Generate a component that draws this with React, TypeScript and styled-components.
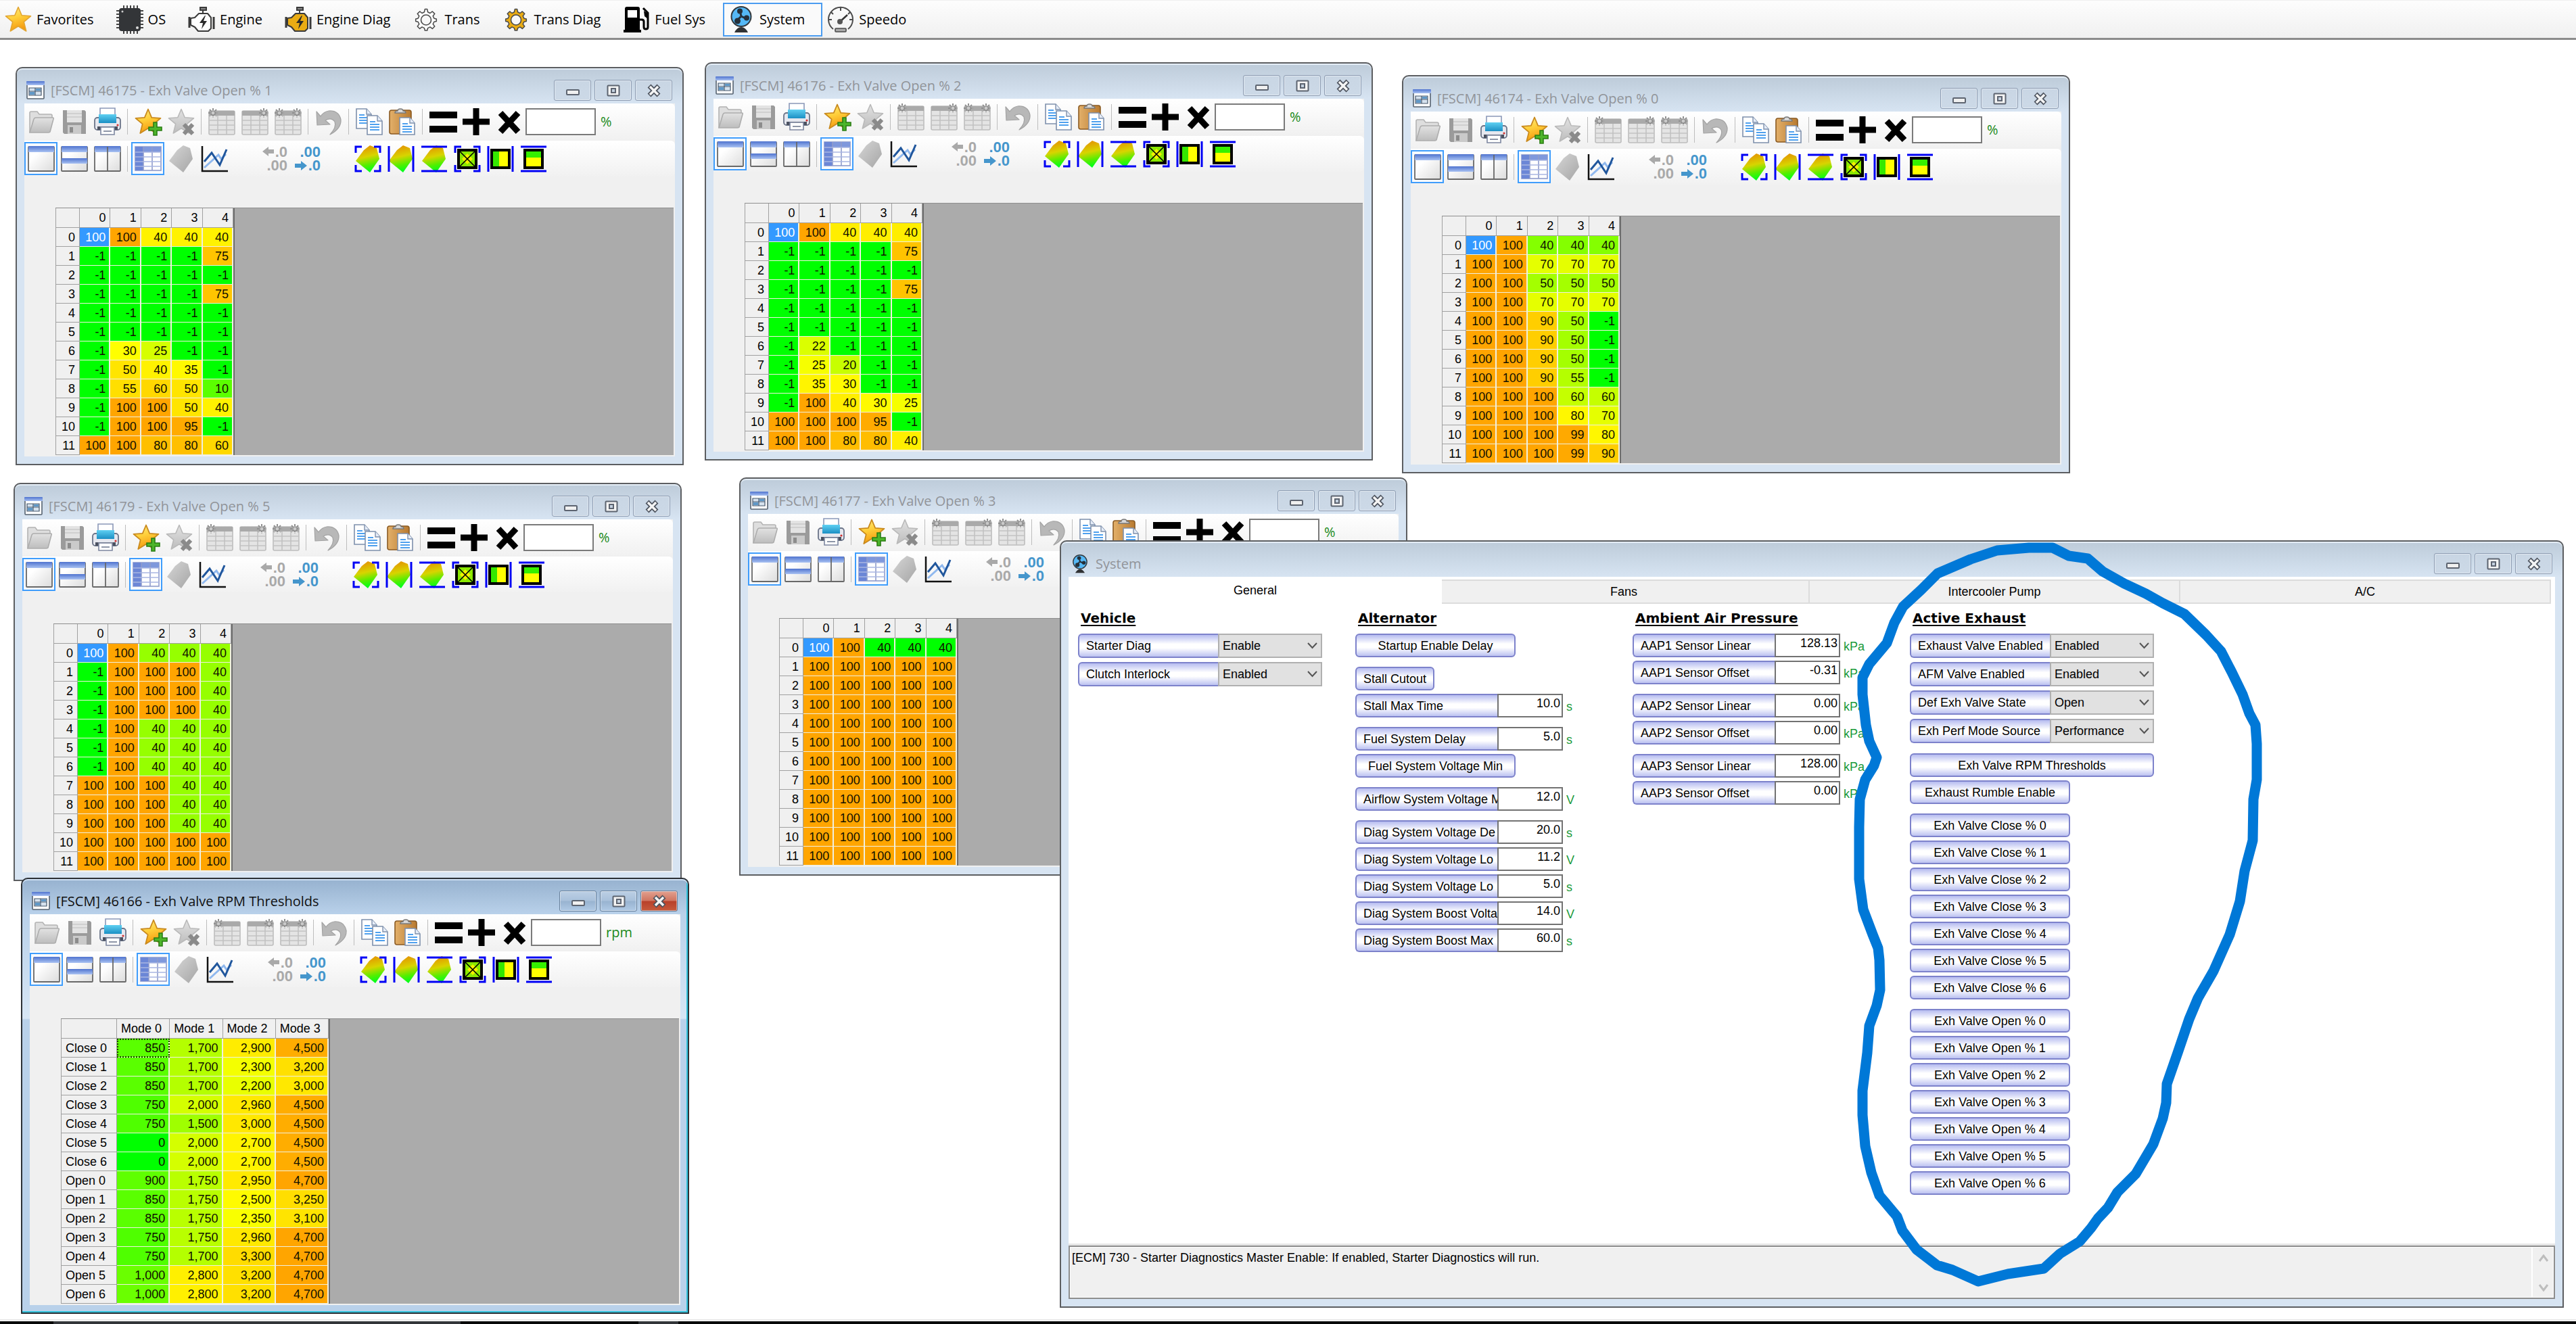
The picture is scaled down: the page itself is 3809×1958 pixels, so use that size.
import React from "react";
import styled, { createGlobalStyle, css } from "styled-components";

const uiFont = `"Liberation Sans", Arial, sans-serif`;
const titleFont = `"Open Sans", "Noto Sans", sans-serif`;

const GlobalStyle = createGlobalStyle`
  *, *::before, *::after { box-sizing: border-box; }
  body { margin: 0; background: #ffffff; color: #000000; font-family: ${uiFont}; font-size: 18px; line-height: 20px; }
  button, input, select, textarea { font: inherit; color: inherit; margin: 0; }
`;

/* ---------- page shell ---------- */

const Page = styled.div`
  display: flex;
  flex-direction: column;
  min-height: 100vh;
  overflow: hidden;
`;

const MainBar = styled.nav`
  display: flex;
  align-items: center;
  height: 59px;
  background: linear-gradient(#fdfdfd, #f0f0f0);
  border-top: 1px solid #f0f0f0;
  border-bottom: 3px solid #8c8c8c;
`;

const MainItem = styled.button<{ $active?: boolean }>`
  display: flex;
  align-items: center;
  gap: 7px;
  height: 50px;
  padding: 0 24px 0 5px;
  border: 2px solid ${(p) => (p.$active ? "#4a9cf0" : "transparent")};
  background: ${(p) => (p.$active ? "#fafafa" : "none")};
  font-family: ${titleFont};
  font-size: 20px;
  white-space: nowrap;
`;

const Workspace = styled.main`
  position: relative;
  flex: 1;
`;

const StatusEdge = styled.div`
  height: 7px;
  border-top: 2px solid #e8e8e8;
  background: #ffffff;
  display: flex;
  align-items: flex-end;
`;

const Taskbar = styled.div`
  display: flex;
  width: 100%;
  height: 4px;
  background: #060808;
`;

const TaskSlot = styled.span<{ $width: number; $offset: number }>`
  width: ${(p) => p.$width}px;
  margin-left: ${(p) => p.$offset}px;
  background: #33363a;
`;

/* ---------- child windows ---------- */

const Frame = styled.section<{ $x: number; $y: number; $active?: boolean }>`
  position: absolute;
  left: ${(p) => p.$x}px;
  top: ${(p) => p.$y}px;
  width: 988px;
  padding: 0 11px 11px;
  border: 2px solid #5c5e61;
  border-radius: 10px 10px 0 0;
  background: ${(p) =>
    p.$active
      ? "linear-gradient(#99b4d1 4px, #b9d1ea 52px, #d7e6f5 206px, #b9d1ea 208px)"
      : "linear-gradient(#bfcddb 4px, #d7e4f2 52px)"};
  box-shadow: inset 0 2px 0 #e4edf6;
  ${(p) =>
    p.$active &&
    css`
      border-color: #2c3136;
      box-shadow: inset 0 2px 0 #cfe0f2, inset -2px -2px 0 #2fc3dc;
    `}
`;

const SystemFrame = styled(Frame)`
  width: auto;
  right: 18px;
  bottom: 17px;
  display: flex;
  flex-direction: column;
`;

const TitleBar = styled.header<{ $active?: boolean }>`
  display: flex;
  align-items: center;
  gap: 5px;
  height: 52px;
  padding: 13px 4px 0 3px;
  color: ${(p) => (p.$active ? "#101010" : "#919499")};
`;

const Title = styled.h2`
  flex: 1;
  margin: 0 0 0 4px;
  font-family: ${titleFont};
  font-size: 20px;
  font-weight: 400;
  line-height: 28px;
  white-space: nowrap;
`;

const CaptionButton = styled.button<{ $danger?: boolean; $active?: boolean }>`
  display: flex;
  align-items: center;
  justify-content: center;
  width: 55px;
  height: 31px;
  padding: 0;
  border: 1px solid ${(p) => (p.$active ? "#66809c" : "#8d9cb2")};
  border-radius: 3px;
  box-shadow: inset 0 0 0 1px rgba(255, 255, 255, 0.45);
  background: ${(p) =>
    p.$danger
      ? "linear-gradient(#e2a08f, #d07560 48%, #b8402a 52%, #c65a3c)"
      : p.$active
        ? "linear-gradient(#bccfe4, #a9c1db 48%, #98b3d0 52%, #b0cae5)"
        : "linear-gradient(#c9d6e4, #ccd9e7)"};
`;

const Client = styled.div`
  background: #f0f0f0;
  padding-bottom: 2px;
`;

const ToolRow = styled.div`
  display: flex;
  align-items: center;
  height: 53px;
  margin-bottom: 2px;
  background: linear-gradient(#ffffff, #f1f1f1);
  border-radius: 0 6px 6px 0;
`;

const Tool = styled.button<{ $on?: boolean }>`
  display: flex;
  align-items: center;
  justify-content: center;
  width: 49px;
  height: 49px;
  padding: 0;
  border: 2px solid ${(p) => (p.$on ? "#3f9dfc" : "transparent")};
  background: ${(p) => (p.$on ? "#f7fafe" : "none")};
`;

const ToolSeparator = styled.span`
  width: 1px;
  height: 38px;
  margin: 0 5px;
  background: #bdbdbd;
`;

const ToolGap = styled.span`
  width: 40px;
`;

const ValueBox = styled.input`
  width: 104px;
  height: 40px;
  padding: 0 6px;
  border: 2px solid #7a7a7a;
  background: #ffffff;
`;

const UnitText = styled.label`
  margin-left: 7px;
  color: #1a8a1a;
  font-family: ${titleFont};
  font-size: 20px;
`;

const GridArea = styled.div`
  margin: 46px 2px 0 46px;
  background: #ababab;
  border-top: 1px solid #8e8e8e;
`;

const DataTable = styled.table<{ $width: number }>`
  width: ${(p) => p.$width}px;
  table-layout: fixed;
  border-collapse: separate;
  border-spacing: 0;
  border-left: 1px solid #a0a0a0;
  border-right: 2px solid #6d6d6d;
`;

const HeadCol = styled.col<{ $width: number }>`
  width: ${(p) => p.$width}px;
`;

const HeadRow = styled.tr`
  height: 29px;
`;

const HeadCell = styled.th<{ $left?: boolean }>`
  height: 28px;
  padding: ${(p) => (p.$left ? "0 0 0 6px" : "0 6px 0 0")};
  border-right: 1px solid #a0a0a0;
  border-bottom: 1px solid #a0a0a0;
  background: #f0f0f0;
  font-weight: 400;
  text-align: ${(p) => (p.$left ? "left" : "right")};
  white-space: nowrap;
`;

const DataCell = styled.td<{ $selected?: boolean; $focus?: boolean }>`
  height: 28px;
  padding: 0 5px 0 0;
  border-right: 2px solid #f0f0e0;
  border-bottom: 1px solid #f0f0e0;
  text-align: right;
  outline: ${(p) => (p.$focus ? "2px dotted #1c3a00" : "none")};
  outline-offset: -2px;
  color: ${(p) => (p.$selected ? "#ffffff" : "#101000")};
`;

/* ---------- system window ---------- */

const SystemClient = styled.div`
  display: flex;
  flex-direction: column;
  flex: 1;
  background: #ffffff;
`;

const TabStrip = styled.div`
  display: grid;
  grid-template-columns: repeat(4, 1fr);
  align-items: end;
  height: 40px;
  padding-right: 6px;
`;

const Tab = styled.button<{ $active?: boolean }>`
  position: relative;
  z-index: ${(p) => (p.$active ? 1 : 0)};
  height: ${(p) => (p.$active ? 40 : 36)}px;
  margin-right: ${(p) => (p.$active ? -4 : 0)}px;
  padding: 0;
  border: ${(p) => (p.$active ? "0" : "2px solid #dcdcdc")};
  border-left-width: 0;
  background: ${(p) => (p.$active ? "#ffffff" : "#f0f0f0")};
`;

const Columns = styled.div`
  display: flex;
  flex: 1;
  padding: 9px 0 0 14px;
`;

const Column = styled.div`
  width: 410px;
  display: flex;
  flex-direction: column;
  align-items: flex-start;
`;

const Heading = styled.h3`
  margin: 0 0 11px 4px;
  font-family: "DejaVu Sans", Verdana, sans-serif;
  font-size: 20px;
  line-height: 24px;
  font-weight: 700;
  text-decoration: underline;
  text-decoration-thickness: 2px;
  text-underline-offset: 3px;
`;

const Group = styled.div`
  display: flex;
  flex-direction: column;
  align-items: flex-start;
  gap: 5px;
  margin-bottom: 14px;
`;

const ChoiceGroup = styled(Group)`
  gap: 6px;
  margin-bottom: 15px;
`;

const glossy = css`
  border: 2px solid #7d82cb;
  background: linear-gradient(#b6bcf0, #ffffff 42%, #ffffff 60%, #bcc2f1);
`;

const LinkButton = styled.button<{ $width: number }>`
  ${glossy}
  width: ${(p) => p.$width}px;
  height: 35px;
  padding: 0;
  border-radius: 6px;
  white-space: nowrap;
`;

const FieldRow = styled.div`
  display: flex;
  align-items: center;
`;

const FieldLabel = styled.label<{ $tall?: boolean }>`
  ${glossy}
  width: ${(p) => (p.$tall ? 207 : 210)}px;
  height: ${(p) => (p.$tall ? 36 : 35)}px;
  padding: 6px 0 0 10px;
  border-right-width: 0;
  border-radius: 6px 0 0 6px;
  overflow: hidden;
  white-space: nowrap;
`;

const NumberBox = styled.input`
  width: 97px;
  height: 35px;
  padding: 0 2px 6px 2px;
  border: 2px solid #727272;
  background: #ffffff;
  text-align: right;
`;

const FieldUnit = styled.span`
  margin-left: 5px;
  padding-top: 2px;
  color: #1a9a3a;
`;

const SelectWrap = styled.span`
  position: relative;
  display: flex;
`;

const Select = styled.select`
  appearance: none;
  width: 154px;
  height: 36px;
  padding: 0 36px 0 5px;
  border: 2px solid #b0b0b0;
  border-radius: 0;
  background: #e1e1e1;
`;

const SelectArrow = styled.svg`
  position: absolute;
  right: 7px;
  top: 13px;
  pointer-events: none;
`;

const Info = styled.div`
  display: flex;
  height: 79px;
  border: 2px solid #8d8d8d;
  background: #f0f0f0;
  box-shadow: inset 0 0 0 1px #ffffff, 0 -3px 0 #e6e6e6;
`;

const InfoText = styled.textarea`
  flex: 1;
  padding: 6px 3px;
  border: 0;
  background: none;
  resize: none;
  overflow: hidden;
`;

const InfoScroll = styled.div`
  display: flex;
  flex-direction: column;
  justify-content: space-between;
  align-items: center;
  width: 33px;
  padding: 11px 0 9px;
  border-left: 2px solid #ffffff;
`;

const Annotation = styled.svg`
  position: absolute;
  left: 2700px;
  top: 731px;
  pointer-events: none;
`;

/* ---------- icons ---------- */

const IconSvg = styled.svg`
  overflow: visible;
`;

const HiddenDefs = styled.svg`
  position: absolute;
`;

const Defs = () => (
  <HiddenDefs width="0" height="0" aria-hidden="true">
    <defs>
      <linearGradient id="gold" x1="0" y1="0" x2="0.3" y2="1">
        <stop offset="0" stopColor="#ffee8a" />
        <stop offset="0.5" stopColor="#ffcf3a" />
        <stop offset="1" stopColor="#f59b10" />
      </linearGradient>
      <linearGradient id="silver" x1="0" y1="0" x2="0" y2="1">
        <stop offset="0" stopColor="#e2e2e2" />
        <stop offset="1" stopColor="#bdbdbd" />
      </linearGradient>
      <linearGradient id="band" x1="0" y1="0" x2="0" y2="1">
        <stop offset="0" stopColor="#4f73cf" />
        <stop offset="1" stopColor="#a9c2f2" />
      </linearGradient>
      <linearGradient id="pane" x1="0" y1="0" x2="1" y2="1">
        <stop offset="0.3" stopColor="#ffffff" />
        <stop offset="1" stopColor="#dcdcdc" />
      </linearGradient>
      <linearGradient id="heat" x1="0.2" y1="0" x2="0.4" y2="1">
        <stop offset="0.1" stopColor="#e39a00" />
        <stop offset="0.45" stopColor="#d8d400" />
        <stop offset="0.75" stopColor="#55ee00" />
        <stop offset="1" stopColor="#00ff1a" />
      </linearGradient>
      <linearGradient id="shade" x1="0" y1="0" x2="1" y2="1">
        <stop offset="0" stopColor="#d6d6d6" />
        <stop offset="1" stopColor="#a6a6a6" />
      </linearGradient>
      <linearGradient id="ink" x1="0" y1="0" x2="0" y2="1">
        <stop offset="0" stopColor="#5fd0f2" />
        <stop offset="1" stopColor="#1b8fc4" />
      </linearGradient>
      <linearGradient id="wood" x1="0" y1="0" x2="1" y2="0">
        <stop offset="0" stopColor="#e3b06a" />
        <stop offset="1" stopColor="#b87a30" />
      </linearGradient>
    </defs>
  </HiddenDefs>
);

const Icon = ({ children, size = 40 }: { children: React.ReactNode; size?: number }) => (
  <IconSvg width={size} height={size} viewBox="0 0 40 40" fill="none" aria-hidden="true">
    {children}
  </IconSvg>
);

const starPath = "M20 1.5l5.2 12.3 13.3 1-10.2 8.6 3.4 13.6L20 29.8 8.3 37l3.4-13.6L1.5 14.8l13.3-1z";

const StarIcon = () => (
  <Icon>
    <path d={starPath} fill="url(#gold)" stroke="#e2a531" strokeWidth="1.6" strokeLinejoin="round" />
  </Icon>
);

const ChipIcon = () => (
  <Icon>
    <path d="M11-1v42M16-1v42M21-1v42M26-1v42M31-1v42" stroke="#444" strokeWidth="2" />
    <path d="M0 7h40M0 12h40M0 17h40M0 22h40M0 27h40M0 32h40" stroke="#444" strokeWidth="2" />
    <rect x="4" y="3" width="32" height="34" rx="4" fill="#333538" />
    <circle cx="9" cy="8" r="1.5" fill="#ccc" />
    <circle cx="31" cy="32" r="2" fill="#ddd" />
  </Icon>
);

const EngineIcon = ({ gold }: { gold?: boolean }) => (
  <Icon>
    <path d="M18 2h9v4h-9zM22 5v7" stroke="#3a3a3a" strokeWidth="2" fill="#888" />
    <path d="M2 16v16M38 16v18" stroke="#3a3a3a" strokeWidth="3" />
    <path
      d="M16 11h13l5 6v16l-4 4H15l-5-6-6-3V18l6-1z"
      fill={gold ? "#eaac14" : "#ffffff"}
      stroke="#3a3a3a"
      strokeWidth="2"
      strokeLinejoin="round"
    />
    <path d="M25 14l-8 11h5l-2 9 8-12h-5l3-8z" fill="#2b2b2b" />
  </Icon>
);

const GearIcon = ({ gold }: { gold?: boolean }) => (
  <Icon>
    <path
      d="M18 3h4l1 5 4 2 4-3 4 4-3 4 2 4 4 1v4l-4 1-2 4 3 4-4 4-4-3-4 2-1 4h-4l-1-4-4-2-4 3-4-4 3-4-2-4-4-1v-4l4-1 2-4-3-4 4-4 4 3 4-2z"
      fill={gold ? "#eaac14" : "#fdfdfd"}
      stroke="#4a4a4a"
      strokeWidth="1.8"
      strokeLinejoin="round"
      transform="translate(3 2) scale(.85)"
    />
    <circle cx="20" cy="20.5" r="7.5" fill="#f8f8f8" stroke="#4a4a4a" strokeWidth="1.6" />
  </Icon>
);

const FuelIcon = () => (
  <Icon>
    <path d="M3 4q0-3 3-3h16q3 0 3 3v31h2v4H1v-4h2z" fill="#000" />
    <rect x="7" y="6" width="14" height="11" fill="#fff" />
    <path d="M25 20h3q3 0 3 3v8q0 3 3 3t3-3V10l-7-7" stroke="#000" strokeWidth="3" />
    <path d="M31 7l6 4v8l-5-4z" fill="#000" />
  </Icon>
);

const FanIcon = ({ size = 40 }: { size?: number }) => (
  <Icon size={size}>
    <circle cx="20" cy="15.5" r="14.5" fill="#55b8f5" stroke="#32383d" strokeWidth="2" />
    <path d="M20 15l-1-4M20 15l6 3M20 15l-5 5" stroke="#25303a" strokeWidth="3" />
    <circle cx="18" cy="7.5" r="4" fill="#25303a" />
    <circle cx="28" cy="17.5" r="4" fill="#25303a" />
    <circle cx="14.5" cy="22" r="4.5" fill="#25303a" />
    <path d="M20 31q6 0 10 8H10q4-8 10-8z" fill="#303234" />
  </Icon>
);

const SpeedoIcon = () => (
  <Icon>
    <path d="M9 34A18 18 0 1 1 31 34" stroke="#4a4a4a" strokeWidth="2" />
    <path d="M20 2v5M6 9l3 3M34 9l-3 3M2 20h5M38 20h-5" stroke="#4a4a4a" strokeWidth="2" />
    <path d="M30 13L18 24" stroke="#333" strokeWidth="2.5" />
    <circle cx="19" cy="23" r="4" fill="#555" />
    <rect x="12" y="33" width="16" height="5" rx="1" fill="#aaa" stroke="#4a4a4a" strokeWidth="1.6" />
  </Icon>
);

const FormIcon = () => (
  <svg width="27" height="27" viewBox="0 0 27 27" fill="none" aria-hidden="true">
    <rect x="1" y="1" width="25" height="25" rx="1" fill="#fff" stroke="#55616f" strokeWidth="1.6" />
    <rect x="0" y="0" width="27" height="6" rx="1" fill="url(#band)" />
    <path d="M4 10h9v5H4zM4 15h9v6H4zM13 10h9v5h-9zM13 15h9v6h-9z" fill="#d6e2ee" stroke="#44566b" strokeWidth="1.2" />
    <path d="M5 16h7v4H5zM14 11h7v3h-7z" fill="#5f98c8" />
  </svg>
);

const OpenIcon = () => (
  <Icon>
    <path d="M3 36V7q0-2 2-2h9l3 4h17q2 0 2 2v5" fill="#dedede" stroke="#b3b3b3" strokeWidth="1.6" />
    <path d="M3 36L9 16q1-2 3-2h25q2 0 1 2l-5 19q-1 1-3 1z" fill="url(#silver)" stroke="#adadad" strokeWidth="1.6" />
  </Icon>
);

const SaveIcon = () => (
  <Icon>
    <path d="M3 3h32l2 2v33H5l-2-2z" fill="#9b9b9b" />
    <rect x="9" y="3" width="22" height="18" fill="#e3e3e3" />
    <path d="M9 8h22M9 13h22" stroke="#d0d0d0" strokeWidth="2" />
    <rect x="10" y="25" width="20" height="13" fill="#cacaca" />
    <rect x="13" y="28" width="5" height="8" fill="#8c8c8c" />
  </Icon>
);

const PrintIcon = () => (
  <Icon>
    <path d="M9 0h22v13H9z" fill="#fff" stroke="#8b98b8" strokeWidth="1.6" />
    <rect x="1" y="14" width="38" height="18" rx="4" fill="#e6e8ef" stroke="#6b7488" strokeWidth="1.8" />
    <path d="M7 9h26v13H7z" fill="url(#ink)" />
    <path d="M5 27h30v5H5z" fill="#4b5160" />
    <path d="M10 28h20v11H10z" fill="#fff" stroke="#7d87a0" strokeWidth="1.6" />
    <path d="M14 34h12" stroke="#8e96a8" strokeWidth="2" />
    <circle cx="35" cy="25" r="1.6" fill="#d03030" />
  </Icon>
);

const FavAddIcon = () => (
  <Icon>
    <path d={starPath} fill="url(#gold)" stroke="#c98a1e" strokeWidth="1.8" strokeLinejoin="round" />
    <path d="M28 21h5v7h7v5h-7v7h-5v-7h-7v-5h7z" fill="#4db52a" stroke="#2b7d14" strokeWidth="1.6" />
  </Icon>
);

const FavRemoveIcon = () => (
  <Icon>
    <path d={starPath} fill="url(#silver)" stroke="#b9b9b9" strokeWidth="1.6" strokeLinejoin="round" />
    <path d="M24 24l13 14M37 24L24 38" stroke="#8a8a8a" strokeWidth="6" />
  </Icon>
);

const Spark = ({ x }: { x: number }) => (
  <g transform={`translate(${x} 0)`}>
    <path d="M6 0v14M-1 7h14M1 2l10 10M11 2L1 12" stroke="#8f8f8f" strokeWidth="2" strokeDasharray="3 1.5" />
    <circle cx="6" cy="7" r="3" fill="#c9c9c9" stroke="#8a8a8a" />
  </g>
);

const AxisIcon = ({ left, right }: { left?: boolean; right?: boolean }) => (
  <Icon>
    <rect x="1" y="4" width="38" height="35" rx="2" fill="#e4e4e4" stroke="#bdbdbd" strokeWidth="1.6" />
    <rect x="1" y="4" width="38" height="7" fill="#aaaaaa" />
    <path d="M14 11v28M27 11v28M1 18h38M1 25h38M1 32h38" stroke="#c2c2c2" strokeWidth="1.6" />
    {left && <Spark x={1} />}
    {right && <Spark x={27} />}
  </Icon>
);

const UndoIcon = () => (
  <Icon>
    <path
      d="M2 5l1 20 19-1-7-6q9-5 14 2 3 8-7 19 17-9 16-22Q35 3 20 4 13 5 8 12z"
      fill="#b8b8b8"
      stroke="#a3a3a3"
      strokeWidth="1.2"
      strokeLinejoin="round"
    />
  </Icon>
);

const Sheet = ({ x, y, h = 28 }: { x: number; y: number; h?: number }) => (
  <g transform={`translate(${x} ${y})`}>
    <path d={`M0 0h15l7 8v${h - 8}H0z`} fill="#fff" stroke="#7e90ac" strokeWidth="1.6" />
    <path d="M15 0v8h7" stroke="#7e90ac" strokeWidth="1.4" fill="#e6edf8" />
    <path d="M4 9h8M4 13h14M4 17h14M4 21h14" stroke="#4ea0ee" strokeWidth="2" />
  </g>
);

const CopyIcon = () => (
  <Icon>
    <Sheet x={1} y={1} h={29} />
    <Sheet x={17} y={11} />
  </Icon>
);

const PasteIcon = () => (
  <Icon>
    <rect x="1" y="3" width="32" height="35" rx="3" fill="url(#wood)" stroke="#8a5a22" strokeWidth="1.6" />
    <path d="M9 7q0-3 4-3 0-3 4-3t4 3q4 0 4 3z" fill="#d8d8d8" stroke="#777" strokeWidth="1.4" />
    <Sheet x={16} y={14} h={25} />
  </Icon>
);

const EqualsIcon = () => (
  <Icon>
    <path d="M0 10h41M0 31h41" stroke="#000" strokeWidth="10" />
  </Icon>
);

const PlusIcon = () => (
  <Icon>
    <path d="M20 0v40M0 20h40" stroke="#000" strokeWidth="9" />
  </Icon>
);

const TimesIcon = () => (
  <Icon>
    <path d="M7 7l26 28M33 7L7 35" stroke="#000" strokeWidth="9" />
  </Icon>
);

const PaneIcon = ({ kind }: { kind: "single" | "rows" | "cols" }) => (
  <Icon>
    <rect x="1" y="2" width="38" height="36" rx="1" fill="url(#pane)" stroke="#686868" strokeWidth="1.8" />
    <rect x="1" y="1" width="38" height="9" fill="url(#band)" />
    {kind === "rows" && <rect x="1" y="19" width="38" height="8" fill="url(#band)" />}
    {kind === "cols" && <path d="M20 2v36" stroke="#686868" strokeWidth="1.8" />}
  </Icon>
);

const TableIcon = () => (
  <Icon>
    <rect x="1" y="2" width="38" height="35" fill="#fff" stroke="#8f9ccb" strokeWidth="1.6" />
    <rect x="1" y="2" width="38" height="8" fill="#7f98dc" />
    <rect x="1" y="2" width="12" height="35" fill="#6b86d6" />
    <path d="M13 2v35M26 2v35" stroke="#8f9ccb" strokeWidth="1.6" />
    <path d="M1 10h38M1 17h38M1 24h38M1 31h38" stroke="#a9b6e2" strokeWidth="1.6" />
  </Icon>
);

const surface = "M23 0l10 4 4 16-14 20L2 23 14 7z";

const SurfaceIcon = () => (
  <Icon>
    <path d={surface} fill="url(#shade)" />
  </Icon>
);

const ChartIcon = () => (
  <Icon>
    <path d="M2 1v37h38" stroke="#111" strokeWidth="2.5" />
    <path d="M5 33L26 14l4 6 7-7" stroke="#8fb8ee" strokeWidth="3" />
    <path d="M5 24l11-13 12 18L38 6" stroke="#20569c" strokeWidth="3" />
  </Icon>
);

const DecimalIcon = ({ more }: { more?: boolean }) => {
  const color = more ? "#4596cc" : "#a9a9a9";
  return (
    <Icon>
      <g fill={color} fontFamily="Liberation Sans, sans-serif" fontWeight="700" fontSize="22" textAnchor="end">
        <text x="39" y="17">{more ? ".00" : ".0"}</text>
        <text x="39" y="37">{more ? ".0" : ".00"}</text>
      </g>
      {more ? (
        <path d="M1 27h9v-4l9 7-9 7v-4H1z" fill={color} />
      ) : (
        <path d="M19 6h-8V2L2 9l9 7v-4h8z" fill={color} />
      )}
    </Icon>
  );
};

const corners = "M2 11V2h9M29 2h9v9M38 29v9h-9M11 38H2v-9";
const sides = "M2 1v38M38 1v38";
const rails = "M1 2h38M1 38h38";

const RangeIcon = ({ shape, frame }: { shape: "surface" | "x" | "cols" | "rows"; frame: string }) => (
  <Icon>
    {shape === "surface" && <path d={surface} fill="url(#heat)" />}
    <path d={frame} stroke="#0000f5" strokeWidth="3" />
    {shape !== "surface" && (
      <>
        <rect x="7" y="7" width="26" height="26" fill="#ffff00" stroke="#000" strokeWidth="4" />
        {shape === "x" && (
          <>
            <path d="M9 9h22v22H9z" fill="#8ae800" />
            <path d="M20 12l8 8-8 8-8-8z" fill="#f4f000" />
            <path d="M9 9l22 22M31 9L9 31" stroke="#000" strokeWidth="1.6" />
          </>
        )}
        {shape === "cols" && <path d="M9 9h9v22H9z" fill="#35e800" />}
        {shape === "rows" && <path d="M9 9h22v9H9z" fill="#35f000" />}
      </>
    )}
  </Icon>
);

/* ---------- window chrome ---------- */

const WindowHeader = ({ title, icon, active }: { title: string; icon: React.ReactNode; active?: boolean }) => (
  <TitleBar $active={active}>
    {icon}
    <Title>{title}</Title>
    <CaptionButton aria-label="Minimize" $active={active}>
      <svg width="20" height="20" viewBox="0 0 20 20">
        <rect x="1" y="9" width="18" height="7" rx="1" fill="#f0f0f0" stroke="#5d6470" strokeWidth="2" />
      </svg>
    </CaptionButton>
    <CaptionButton aria-label="Restore" $active={active}>
      <svg width="20" height="20" viewBox="0 0 20 20">
        <rect x="1.5" y="2.5" width="17" height="15" rx="1" fill="#f4f4f4" stroke="#5d6470" strokeWidth="2" />
        <rect x="7" y="7" width="6" height="6" fill="#c3d0df" stroke="#5d6470" strokeWidth="2" />
      </svg>
    </CaptionButton>
    <CaptionButton aria-label="Close" $active={active} $danger={active}>
      <svg width="20" height="20" viewBox="0 0 20 20">
        <path d="M3 3l14 14M17 3L3 17" stroke="#4d535e" strokeWidth="7" />
        <path d="M4 4l12 12M16 4L4 16" stroke="#f4f4f4" strokeWidth="3.5" />
      </svg>
    </CaptionButton>
  </TitleBar>
);

const GridTools = ({ id, unit }: { id: string; unit: string }) => (
  <>
    <ToolRow>
      <Tool aria-label="Open"><OpenIcon /></Tool>
      <Tool aria-label="Save"><SaveIcon /></Tool>
      <Tool aria-label="Print"><PrintIcon /></Tool>
      <ToolSeparator />
      <Tool aria-label="Add favorite"><FavAddIcon /></Tool>
      <Tool aria-label="Remove favorite"><FavRemoveIcon /></Tool>
      <ToolSeparator />
      <Tool aria-label="Row axis"><AxisIcon left /></Tool>
      <Tool aria-label="Column axis"><AxisIcon right /></Tool>
      <Tool aria-label="Both axes"><AxisIcon left right /></Tool>
      <ToolSeparator />
      <Tool aria-label="Undo"><UndoIcon /></Tool>
      <ToolSeparator />
      <Tool aria-label="Copy"><CopyIcon /></Tool>
      <Tool aria-label="Paste"><PasteIcon /></Tool>
      <ToolSeparator />
      <Tool aria-label="Set"><EqualsIcon /></Tool>
      <Tool aria-label="Add"><PlusIcon /></Tool>
      <Tool aria-label="Multiply"><TimesIcon /></Tool>
      <ValueBox id={`${id}-value`} />
      <UnitText htmlFor={`${id}-value`}>{unit}</UnitText>
    </ToolRow>
    <ToolRow>
      <Tool $on aria-label="Single pane"><PaneIcon kind="single" /></Tool>
      <Tool aria-label="Split rows"><PaneIcon kind="rows" /></Tool>
      <Tool aria-label="Split columns"><PaneIcon kind="cols" /></Tool>
      <ToolSeparator />
      <Tool $on aria-label="Table view"><TableIcon /></Tool>
      <Tool aria-label="Surface view"><SurfaceIcon /></Tool>
      <Tool aria-label="Chart view"><ChartIcon /></Tool>
      <ToolGap />
      <Tool aria-label="Fewer decimals"><DecimalIcon /></Tool>
      <Tool aria-label="More decimals"><DecimalIcon more /></Tool>
      <ToolGap />
      <Tool aria-label="Surface all"><RangeIcon shape="surface" frame={corners} /></Tool>
      <Tool aria-label="Surface columns"><RangeIcon shape="surface" frame={sides} /></Tool>
      <Tool aria-label="Surface rows"><RangeIcon shape="surface" frame={rails} /></Tool>
      <Tool aria-label="Table all"><RangeIcon shape="x" frame={corners} /></Tool>
      <Tool aria-label="Table columns"><RangeIcon shape="cols" frame={sides} /></Tool>
      <Tool aria-label="Table rows"><RangeIcon shape="rows" frame={rails} /></Tool>
    </ToolRow>
  </>
);

// Green at the minimum, yellow at the mean, orange at the maximum.
const heatColor = (value: number, min: number, mean: number, max: number) => {
  if (value <= mean) {
    const t = (value - min) / (mean - min || 1);
    return `rgb(${Math.round(255 * t)}, 255, 0)`;
  }
  const t = (value - mean) / (max - mean || 1);
  return `rgb(255, ${Math.round(255 - 90 * t)}, 0)`;
};

type GridProps = {
  title: string;
  x: number;
  y: number;
  rows: number[][];
  colNames?: string[];
  rowNames?: string[];
  unit?: string;
  active?: boolean;
};

const GridWindow = ({ title, x, y, rows, colNames, rowNames, unit = "%", active }: GridProps) => {
  const flat = rows.flat();
  const min = Math.min(...flat);
  const max = Math.max(...flat);
  const mean = flat.reduce((a, b) => a + b, 0) / flat.length;
  const named = Boolean(rowNames);
  return (
    <Frame $x={x} $y={y} $active={active} aria-label={title}>
      <WindowHeader title={title} icon={<FormIcon />} active={active} />
      <Client>
        <GridTools id={title.slice(7, 12)} unit={unit} />
        <GridArea>
          <DataTable $width={named ? 398 : 265}>
            <colgroup>
              <HeadCol $width={named ? 82 : 35} />
            </colgroup>
            <thead>
              <HeadRow>
                <HeadCell />
                {rows[0].map((_, i) => (
                  <HeadCell key={i} scope="col" $left={named}>{colNames ? colNames[i] : i}</HeadCell>
                ))}
              </HeadRow>
            </thead>
            <tbody>
              {rows.map((row, r) => (
                <tr key={r}>
                  <HeadCell scope="row" $left={named}>{rowNames ? rowNames[r] : r}</HeadCell>
                  {row.map((v, c) => {
                    const first = r === 0 && c === 0;
                    const picked = first && !active;
                    return (
                      <DataCell
                        key={c}
                        $selected={picked}
                        $focus={first && active}
                        style={{ backgroundColor: picked ? "#3399ff" : heatColor(v, min, mean, max) }}
                      >
                        {v.toLocaleString("en-US")}
                      </DataCell>
                    );
                  })}
                </tr>
              ))}
            </tbody>
          </DataTable>
        </GridArea>
      </Client>
    </Frame>
  );
};

/* ---------- data ---------- */

const same = (n: number, row: number[]) => Array.from({ length: n }, () => row);
const closed = [-1, -1, -1, -1, -1];
const full = [100, 100, 100, 100, 100];

const open1 = [
  [100, 100, 40, 40, 40], [-1, -1, -1, -1, 75], closed, [-1, -1, -1, -1, 75], closed, closed,
  [-1, 30, 25, -1, -1], [-1, 50, 40, 35, -1], [-1, 55, 60, 50, 10], [-1, 100, 100, 50, 40],
  [-1, 100, 100, 95, -1], [100, 100, 80, 80, 60],
];
const open2 = [
  [100, 100, 40, 40, 40], [-1, -1, -1, -1, 75], closed, [-1, -1, -1, -1, 75], closed, closed,
  [-1, 22, -1, -1, -1], [-1, 25, 20, -1, -1], [-1, 35, 30, -1, -1], [-1, 100, 40, 30, 25],
  [100, 100, 100, 95, -1], [100, 100, 80, 80, 40],
];
const open0 = [
  [100, 100, 40, 40, 40], [100, 100, 70, 70, 70], [100, 100, 50, 50, 50], [100, 100, 70, 70, 70],
  ...same(3, [100, 100, 90, 50, -1]), [100, 100, 90, 55, -1], [100, 100, 100, 60, 60],
  [100, 100, 100, 80, 70], [100, 100, 100, 99, 80], [100, 100, 100, 99, 90],
];
const open5 = [
  [100, 100, 40, 40, 40], ...same(3, [-1, 100, 100, 100, 40]), ...same(3, [-1, 100, 40, 40, 40]),
  ...same(3, [100, 100, 100, 40, 40]), full, full,
];
const open3 = [[100, 100, 40, 40, 40], ...same(11, full)];
const rpm = [
  [850, 1700, 2900, 4500], [850, 1700, 2300, 3200], [850, 1700, 2200, 3000], [750, 2000, 2960, 4500],
  [750, 1500, 3000, 4500], [0, 2000, 2700, 4500], [0, 2000, 2700, 4500], [900, 1750, 2950, 4700],
  [850, 1750, 2500, 3250], [850, 1750, 2350, 3100], [750, 1750, 2960, 4700], [750, 1700, 3300, 4700],
  [1000, 2800, 3200, 4700], [1000, 2800, 3200, 4700],
];
const seven = [0, 1, 2, 3, 4, 5, 6];

/* ---------- system window parts ---------- */

const Choice = ({ id, label, value }: { id: string; label: string; value: string }) => (
  <FieldRow>
    <FieldLabel htmlFor={id} $tall>{label}</FieldLabel>
    <SelectWrap>
      <Select id={id} defaultValue={value}>
        <option value={value}>{value}</option>
      </Select>
      <SelectArrow width="15" height="10" viewBox="0 0 15 10" fill="none">
        <path d="M1 1l6.5 7L14 1" stroke="#555" strokeWidth="2" />
      </SelectArrow>
    </SelectWrap>
  </FieldRow>
);

const NumberField = ({ id, label, value, unit }: { id: string; label: string; value: string; unit: string }) => (
  <FieldRow>
    <FieldLabel htmlFor={id}>{label}</FieldLabel>
    <NumberBox id={id} defaultValue={value} />
    <FieldUnit>{unit}</FieldUnit>
  </FieldRow>
);

const SystemWindow = () => (
  <SystemFrame $x={1567} $y={740} aria-label="System">
    <WindowHeader title="System" icon={<FanIcon size={28} />} />
    <SystemClient>
      <TabStrip role="tablist">
        <Tab role="tab" aria-selected $active>General</Tab>
        <Tab role="tab">Fans</Tab>
        <Tab role="tab">Intercooler Pump</Tab>
        <Tab role="tab">A/C</Tab>
      </TabStrip>
      <Columns>
        <Column>
          <Heading>Vehicle</Heading>
          <ChoiceGroup>
            <Choice id="starter" label="Starter Diag" value="Enable" />
            <Choice id="clutch" label="Clutch Interlock" value="Enabled" />
          </ChoiceGroup>
        </Column>
        <Column>
          <Heading>Alternator</Heading>
          <Group>
            <LinkButton $width={237}>Startup Enable Delay</LinkButton>
          </Group>
          <Group>
            <LinkButton $width={117}>Stall Cutout</LinkButton>
            <NumberField id="stall" label="Stall Max Time" value="10.0" unit="s" />
          </Group>
          <Group>
            <NumberField id="fuel" label="Fuel System Delay" value="5.0" unit="s" />
            <LinkButton $width={237}>Fuel System Voltage Min</LinkButton>
          </Group>
          <Group>
            <NumberField id="airflow" label="Airflow System Voltage M" value="12.0" unit="V" />
          </Group>
          <Group>
            <NumberField id="diag1" label="Diag System Voltage De" value="20.0" unit="s" />
            <NumberField id="diag2" label="Diag System Voltage Lo" value="11.2" unit="V" />
            <NumberField id="diag3" label="Diag System Voltage Lo" value="5.0" unit="s" />
            <NumberField id="diag4" label="Diag System Boost Volta" value="14.0" unit="V" />
            <NumberField id="diag5" label="Diag System Boost Max" value="60.0" unit="s" />
          </Group>
        </Column>
        <Column>
          <Heading>Ambient Air Pressure</Heading>
          <Group>
            <NumberField id="aap1l" label="AAP1 Sensor Linear" value="128.13" unit="kPa" />
            <NumberField id="aap1o" label="AAP1 Sensor Offset" value="-0.31" unit="kPa" />
          </Group>
          <Group>
            <NumberField id="aap2l" label="AAP2 Sensor Linear" value="0.00" unit="kPa" />
            <NumberField id="aap2o" label="AAP2 Sensor Offset" value="0.00" unit="kPa" />
          </Group>
          <Group>
            <NumberField id="aap3l" label="AAP3 Sensor Linear" value="128.00" unit="kPa" />
            <NumberField id="aap3o" label="AAP3 Sensor Offset" value="0.00" unit="kPa" />
          </Group>
        </Column>
        <Column>
          <Heading>Active Exhaust</Heading>
          <ChoiceGroup>
            <Choice id="exh" label="Exhaust Valve Enabled" value="Enabled" />
            <Choice id="afm" label="AFM Valve Enabled" value="Enabled" />
            <Choice id="def" label="Def Exh Valve State" value="Open" />
            <Choice id="perf" label="Exh Perf Mode Source" value="Performance Mode" />
          </ChoiceGroup>
          <Group>
            <LinkButton $width={361}>Exh Valve RPM Thresholds</LinkButton>
            <LinkButton $width={237}>Exhaust Rumble Enable</LinkButton>
          </Group>
          <Group>
            {seven.map((n) => (
              <LinkButton key={n} $width={237}>{`Exh Valve Close % ${n}`}</LinkButton>
            ))}
          </Group>
          <Group>
            {seven.map((n) => (
              <LinkButton key={n} $width={237}>{`Exh Valve Open % ${n}`}</LinkButton>
            ))}
          </Group>
        </Column>
      </Columns>
      <Info>
        <InfoText
          readOnly
          aria-label="Parameter description"
          value="[ECM] 730 - Starter Diagnostics Master Enable: If enabled, Starter Diagnostics will run."
        />
        <InfoScroll>
          <svg width="16" height="11" viewBox="0 0 16 11" fill="none">
            <path d="M2 10l6-8 6 8" stroke="#bdbdbd" strokeWidth="3" />
          </svg>
          <svg width="16" height="11" viewBox="0 0 16 11" fill="none">
            <path d="M2 1l6 8 6-8" stroke="#bdbdbd" strokeWidth="3" />
          </svg>
        </InfoScroll>
      </Info>
    </SystemClient>
  </SystemFrame>
);

// Freehand marker loop round the Active Exhaust column.
const loop =
  "335,20 300,20 253,24 214,37 165,58 141,82 114,107 101,131 90,161 64,192 54,212 54,237 59,282 64,306 75,330 71,342 58,363 50,392 49,433 49,510 55,555 69,592 77,612 79,630 80,674 75,697 64,727 61,767 54,823 54,859 58,905 67,944 79,978 105,1009 113,1030 134,1058 164,1081 187,1088 225,1105 269,1094 322,1086 346,1064 375,1046 392,1026 402,1012 417,996 431,973 458,946 484,902 498,864 503,841 504,813 520,767 537,717 550,686 573,646 589,610 597,592 612,543 619,498 631,453 632,392 637,363 637,310 635,282 626,265 616,237 600,204 584,173 562,149 530,118 498,102 473,88 441,73 409,55 387,36 359,32";

export default function App() {
  return (
    <Page>
      <GlobalStyle />
      <Defs />
      <MainBar aria-label="Sections">
        <MainItem><StarIcon />Favorites</MainItem>
        <MainItem><ChipIcon />OS</MainItem>
        <MainItem><EngineIcon />Engine</MainItem>
        <MainItem><EngineIcon gold />Engine Diag</MainItem>
        <MainItem><GearIcon />Trans</MainItem>
        <MainItem><GearIcon gold />Trans Diag</MainItem>
        <MainItem><FuelIcon />Fuel Sys</MainItem>
        <MainItem $active><FanIcon />System</MainItem>
        <MainItem><SpeedoIcon />Speedo</MainItem>
      </MainBar>
      <Workspace>
        <GridWindow title="[FSCM] 46175 - Exh Valve Open % 1" x={23} y={40} rows={open1} />
        <GridWindow title="[FSCM] 46176 - Exh Valve Open % 2" x={1042} y={33} rows={open2} />
        <GridWindow title="[FSCM] 46174 - Exh Valve Open % 0" x={2073} y={52} rows={open0} />
        <GridWindow title="[FSCM] 46179 - Exh Valve Open % 5" x={20} y={655} rows={open5} />
        <GridWindow title="[FSCM] 46177 - Exh Valve Open % 3" x={1093} y={647} rows={open3} />
        <GridWindow
          title="[FSCM] 46166 - Exh Valve RPM Thresholds"
          x={31}
          y={1239}
          rows={rpm}
          unit="rpm"
          colNames={["Mode 0", "Mode 1", "Mode 2", "Mode 3"]}
          rowNames={[...seven.map((n) => `Close ${n}`), ...seven.map((n) => `Open ${n}`)]}
          active
        />
        <SystemWindow />
        <Annotation width="680" height="1130" viewBox="0 0 680 1130" fill="none" aria-hidden="true">
          <polygon points={loop} stroke="#0078d7" strokeWidth="15" strokeLinejoin="round" />
        </Annotation>
      </Workspace>
      <StatusEdge>
        <Taskbar>
          <TaskSlot $width={602} $offset={79} />
          <TaskSlot $width={59} $offset={263} />
        </Taskbar>
      </StatusEdge>
    </Page>
  );
}
